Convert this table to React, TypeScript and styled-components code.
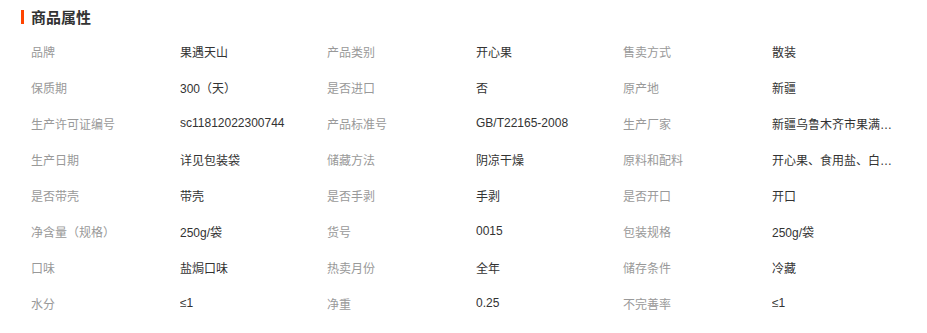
import React from "react";
import styled, { createGlobalStyle } from "styled-components";

const Global = createGlobalStyle`
  html, body { margin: 0; padding: 0; background: #fff; }
  body { font-family: "Liberation Sans", "Noto Sans CJK SC", sans-serif; }
`;

const Wrapper = styled.section`
  width: 927px;
  height: 333px;
  box-sizing: border-box;
  padding: 5px 0 0 21px;
  overflow: hidden;
`;

const Header = styled.div`
  height: 24px;
  display: flex;
  align-items: center;
  gap: 7px;
`;

const Bar = styled.span`
  display: block;
  width: 3px;
  height: 14px;
  background: #ff4400;
`;

const Title = styled.h3`
  margin: 0;
  font-size: 15px;
  font-weight: bold;
  color: #333;
  line-height: 24px;
  font-family: "Noto Sans CJK SC", sans-serif;
`;

const List = styled.ul`
  list-style: none;
  margin: 4px 0 0;
  padding: 0 0 0 10px;
  display: grid;
  grid-template-columns: repeat(3, 296px);
`;

const Item = styled.li`
  display: flex;
  height: 36px;
  align-items: center;
  font-size: 12px;
`;

const Label = styled.span`
  width: 149px;
  flex: none;
  color: #999;
  white-space: nowrap;
`;

const Value = styled.span`
  width: 124px;
  color: #333;
  white-space: nowrap;
  overflow: hidden;
  text-overflow: ellipsis;
`;

const attrs: [string, string][] = [
  ["品牌", "果遇天山"],
  ["产品类别", "开心果"],
  ["售卖方式", "散装"],
  ["保质期", "300（天）"],
  ["是否进口", "否"],
  ["原产地", "新疆"],
  ["生产许可证编号", "sc11812022300744"],
  ["产品标准号", "GB/T22165-2008"],
  ["生产厂家", "新疆乌鲁木齐市果满园食品有限公司"],
  ["生产日期", "详见包装袋"],
  ["储藏方法", "阴凉干燥"],
  ["原料和配料", "开心果、食用盐、白砂糖"],
  ["是否带壳", "带壳"],
  ["是否手剥", "手剥"],
  ["是否开口", "开口"],
  ["净含量（规格）", "250g/袋"],
  ["货号", "0015"],
  ["包装规格", "250g/袋"],
  ["口味", "盐焗口味"],
  ["热卖月份", "全年"],
  ["储存条件", "冷藏"],
  ["水分", "≤1"],
  ["净重", "0.25"],
  ["不完善率", "≤1"],
];

export default function App() {
  return (
    <>
      <Global />
      <Wrapper>
        <Header>
          <Bar />
          <Title>商品属性</Title>
        </Header>
        <List>
          {attrs.map(([k, v], i) => (
            <Item key={i}>
              <Label>{k}</Label>
              <Value title={v}>{v}</Value>
            </Item>
          ))}
        </List>
      </Wrapper>
    </>
  );
}
